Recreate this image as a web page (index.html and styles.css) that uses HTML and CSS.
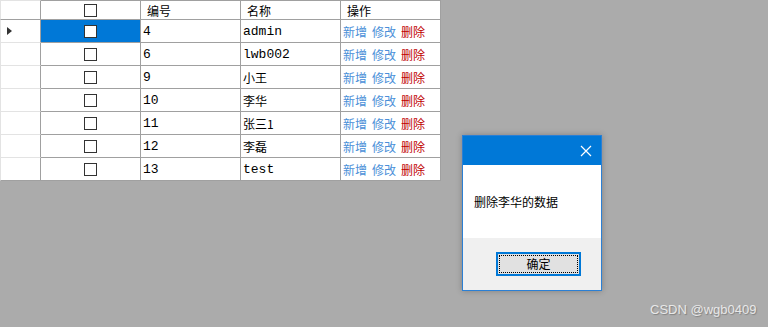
FILE: index.html
```html
<!DOCTYPE html>
<html lang="en">
<head>
    <meta charset="UTF-8">
    <meta name="viewport" content="width=device-width, initial-scale=1.0">
    <title>DataGridView</title>
    <link rel="stylesheet" href="styles.css">
</head>
<body>
    <div class="grid">
        <!-- Header -->
        <div class="row head">
            <div class="cell rowhead"></div>
            <div class="cell check"><span class="box"></span></div>
            <div class="cell title">编号</div>
            <div class="cell title">名称</div>
            <div class="cell title">操作</div>
        </div>

        <div class="row">
            <div class="cell rowhead"><span class="arrow"></span></div>
            <div class="cell check selected"><span class="box"></span></div>
            <div class="cell text">4</div>
            <div class="cell text">admin</div>
            <div class="cell ops"><span class="add">新增</span><span class="edit">修改</span><span class="del">删除</span></div>
        </div>
        <div class="row">
            <div class="cell rowhead"></div>
            <div class="cell check"><span class="box"></span></div>
            <div class="cell text">6</div>
            <div class="cell text">lwb002</div>
            <div class="cell ops"><span class="add">新增</span><span class="edit">修改</span><span class="del">删除</span></div>
        </div>
        <div class="row">
            <div class="cell rowhead"></div>
            <div class="cell check"><span class="box"></span></div>
            <div class="cell text">9</div>
            <div class="cell text cjk">小王</div>
            <div class="cell ops"><span class="add">新增</span><span class="edit">修改</span><span class="del">删除</span></div>
        </div>
        <div class="row">
            <div class="cell rowhead"></div>
            <div class="cell check"><span class="box"></span></div>
            <div class="cell text">10</div>
            <div class="cell text cjk">李华</div>
            <div class="cell ops"><span class="add">新增</span><span class="edit">修改</span><span class="del">删除</span></div>
        </div>
        <div class="row">
            <div class="cell rowhead"></div>
            <div class="cell check"><span class="box"></span></div>
            <div class="cell text">11</div>
            <div class="cell text cjk">张三1</div>
            <div class="cell ops"><span class="add">新增</span><span class="edit">修改</span><span class="del">删除</span></div>
        </div>
        <div class="row">
            <div class="cell rowhead"></div>
            <div class="cell check"><span class="box"></span></div>
            <div class="cell text">12</div>
            <div class="cell text cjk">李磊</div>
            <div class="cell ops"><span class="add">新增</span><span class="edit">修改</span><span class="del">删除</span></div>
        </div>
        <div class="row last">
            <div class="cell rowhead"></div>
            <div class="cell check"><span class="box"></span></div>
            <div class="cell text">13</div>
            <div class="cell text">test</div>
            <div class="cell ops"><span class="add">新增</span><span class="edit">修改</span><span class="del">删除</span></div>
        </div>
    </div>

    <!-- Message box window -->
    <div class="msgbox">
        <div class="msgbar">
            <svg class="close" width="12" height="12" viewBox="0 0 12 12">
                <path d="M1 1 L11 11 M11 1 L1 11" stroke="#fff" stroke-width="1.2" fill="none"/>
            </svg>
        </div>
        <div class="msgbody">删除李华的数据</div>
        <div class="msgfoot">
            <button class="okbtn"><span>确定</span></button>
        </div>
    </div>

    <div class="mark">CSDN @wgb0409</div>
</body>
</html>
```

FILE: styles.css
```css
body {
    margin: 0;
    background-color: #ababab;
    font-family: "Liberation Mono", "Noto Sans CJK SC", monospace;
    font-size: 13px;
    color: #000;
    height: 327px;
    overflow: hidden;
}

.grid {
    width: 441px;
    background-color: #fff;
}

.row {
    display: grid;
    grid-template-columns: 41px 100px 100px 100px 100px;
    height: 23px;
}

.row.head {
    height: 20px;
}

.cell {
    box-sizing: border-box;
    border-right: 1px solid #a0a0a0;
    border-bottom: 1px solid #a0a0a0;
    display: flex;
    align-items: center;
    overflow: hidden;
    white-space: nowrap;
}

.head .cell {
    border-top: 1px solid #a0a0a0;
}

.rowhead {
    border-left: 1px solid #e3e3e3;
    border-bottom-color: #e3e3e3;
}

.head .rowhead {
    border-top-color: #e3e3e3;
    border-bottom-color: #a0a0a0;
}

.last .cell {
    border-bottom-color: #a0a0a0;
}

.arrow {
    margin-left: 6px;
    width: 0;
    height: 0;
    border-top: 4px solid transparent;
    border-bottom: 4px solid transparent;
    border-left: 5px solid #333;
}

.check {
    justify-content: center;
}

.check .box {
    width: 13px;
    height: 13px;
    box-sizing: border-box;
    border: 1px solid #333;
    background-color: #fff;
    margin-right: 1px;
}

.selected {
    background-color: #0078d7;
}

.title {
    font-family: "Noto Sans CJK SC", sans-serif;
    font-size: 12px;
    padding-left: 6px;
}

.text {
    padding-left: 2px;
    padding-top: 1px;
}

.cjk {
    font-family: "Noto Sans CJK SC", sans-serif;
    font-size: 12px;
}

.ops {
    font-family: "Noto Sans CJK SC", sans-serif;
    font-size: 12px;
    padding-left: 2px;
    gap: 5px;
}

.add, .edit {
    color: #4a8fd8;
}

.del {
    color: #c00000;
}

.msgbox {
    position: absolute;
    left: 462px;
    top: 135px;
    width: 140px;
    height: 156px;
    box-sizing: border-box;
    border: 1px solid #2b7fd4;
    background-color: #fff;
    box-shadow: 0 0 6px rgba(0, 0, 0, 0.25);
    display: flex;
    flex-direction: column;
    font-family: "Noto Sans CJK SC", sans-serif;
    font-size: 12px;
}

.msgbar {
    height: 29px;
    background-color: #0078d7;
    display: flex;
    align-items: center;
    justify-content: flex-end;
    padding-right: 9px;
}

.msgbody {
    height: 73px;
    display: flex;
    align-items: center;
    padding-left: 11px;
    box-sizing: border-box;
}

.msgfoot {
    flex: 1;
    background-color: #f0f0f0;
    display: flex;
    align-items: center;
    justify-content: flex-end;
    padding-right: 20px;
}

.okbtn {
    width: 85px;
    height: 24px;
    box-sizing: border-box;
    border: 2px solid #0078d7;
    background-color: #e1e1e1;
    padding: 1px;
    font-family: "Noto Sans CJK SC", sans-serif;
    font-size: 12px;
    margin-top: -1px;
}

.okbtn span {
    display: flex;
    height: 100%;
    align-items: center;
    justify-content: center;
    border: 1px dotted #000;
    box-sizing: border-box;
}

.mark {
    position: absolute;
    left: 650px;
    top: 302px;
    font-family: "Liberation Sans", sans-serif;
    font-size: 13px;
    color: #e8e8e8;
    text-shadow: 1px 1px 1px rgba(0, 0, 0, 0.25);
}
```
